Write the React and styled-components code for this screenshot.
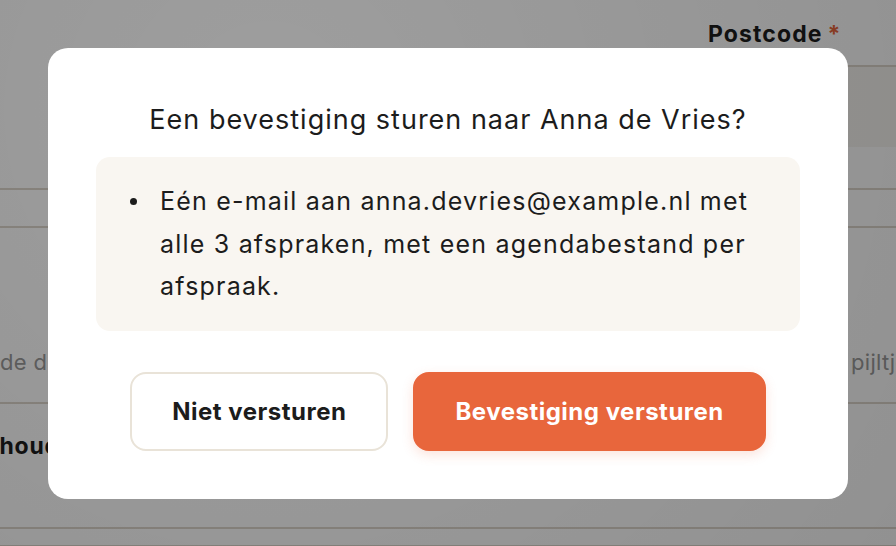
import styled, { createGlobalStyle } from "styled-components";

const GlobalStyle = createGlobalStyle`
    html, body {
        margin: 0;
        padding: 0;
        width: 896px;
        height: 546px;
        overflow: hidden;
        font-family: Inter, "Noto Sans", sans-serif;
        background: #ffffff;
    }
`;

const colors = {
    text: "#1c1c1c",
    muted: "#9a9a9a",
    line: "#ddd6cc",
    accent: "#e8663c",
    soft: "#f9f6f1",
    buttonBorder: "#e9e3d8",
};

// ---- page behind the dialog ----

const Page = styled.div`
    position: relative;
    width: 896px;
    height: 546px;
    overflow: hidden;
    background: #ffffff;
`;

const TopRow = styled.div`
    display: grid;
    grid-template-columns: 708px 1fr;
    height: 150px;
`;

const Field = styled.div`
    display: flex;
    flex-direction: column;
    padding-top: 20px;
`;

const Label = styled.div`
    font-size: 23px;
    font-weight: 700;
    letter-spacing: 1.1px;
    color: ${colors.text};
    line-height: 28px;
    white-space: nowrap;

    span {
        color: ${colors.accent};
        margin-left: 5px;
    }
`;

const Input = styled.div`
    margin-top: 17px;
    height: 80px;
    border-top: 2px solid ${colors.line};
    background: #f7f5f1;
`;

const Divider = styled.div`
    height: 0;
    border-top: 2px solid ${colors.line};
    margin-top: ${(p) => p.$gap}px;
`;

const Hint = styled.div`
    display: flex;
    justify-content: space-between;
    margin-top: 120px;
    font-size: 22px;
    letter-spacing: 0.3px;
    line-height: 28px;
    color: ${colors.muted};
    white-space: nowrap;
    overflow: hidden;

    span:last-child {
        width: 45px;
        overflow: hidden;
    }
`;

const SectionTitle = styled.div`
    margin-top: 28px;
    margin-left: -23px;
    font-size: 23px;
    font-weight: 700;
    letter-spacing: 0.8px;
    color: ${colors.text};
    line-height: 28px;
`;

const Overlay = styled.div`
    position: absolute;
    inset: 0;
    background: radial-gradient(circle at 30% 20%, rgba(0, 0, 0, 0.38), rgba(0, 0, 0, 0.43));
    display: flex;
    justify-content: center;
    align-items: flex-start;
    padding-top: 48px;
`;

// ---- dialog ----

const Dialog = styled.div`
    width: 800px;
    box-sizing: border-box;
    padding: 56px 48px 48px;
    background: #ffffff;
    border-radius: 20px;
    display: flex;
    flex-direction: column;
`;

const Title = styled.h2`
    margin: 0 0 21px;
    text-align: center;
    font-size: 27px;
    font-weight: 400;
    letter-spacing: 1px;
    line-height: 32px;
    color: ${colors.text};
`;

const Summary = styled.ul`
    margin: 0;
    padding: 23px 44px 23px 64px;
    background: ${colors.soft};
    border-radius: 14px;
    list-style: none;
`;

const Item = styled.li`
    position: relative;
    font-size: 25px;
    letter-spacing: 1.2px;
    line-height: 42.5px;
    color: ${colors.text};

    &::before {
        content: "";
        position: absolute;
        left: -30px;
        top: 18px;
        width: 7px;
        height: 7px;
        border-radius: 50%;
        background: ${colors.text};
    }
`;

const Actions = styled.div`
    display: flex;
    justify-content: center;
    gap: 25px;
    margin-top: 41px;
`;

const Button = styled.button`
    height: 79px;
    padding: 0 40px;
    border-radius: 16px;
    font-family: inherit;
    font-size: 24px;
    font-weight: 700;
    letter-spacing: 0.5px;
    cursor: pointer;
    border: 2px solid ${(p) => (p.$primary ? colors.accent : colors.buttonBorder)};
    background: ${(p) => (p.$primary ? colors.accent : "#ffffff")};
    color: ${(p) => (p.$primary ? "#ffffff" : colors.text)};
    box-shadow: ${(p) => (p.$primary ? "0 4px 12px rgba(232, 102, 60, 0.18)" : "none")};
`;

export default function App() {
    return (
        <>
            <GlobalStyle />
            <Page>
                <TopRow>
                    <div />
                    <Field>
                        <Label>
                            Postcode<span>*</span>
                        </Label>
                        <Input />
                    </Field>
                </TopRow>
                <Divider $gap={38} />
                <Divider $gap={36} />
                <Hint>
                    <span>de dienst of afspraak</span>
                    <span>pijltjes</span>
                </Hint>
                <Divider $gap={26} />
                <SectionTitle>Inhoud</SectionTitle>
                <Divider $gap={67} />
                <Divider $gap={16} />

                <Overlay>
                    <Dialog role="dialog" aria-modal="true">
                        <Title>Een bevestiging sturen naar Anna de Vries?</Title>
                        <Summary>
                            <Item>
                                Eén e-mail aan anna.devries@example.nl met alle 3 afspraken, met een
                                agendabestand per afspraak.
                            </Item>
                        </Summary>
                        <Actions>
                            <Button>Niet versturen</Button>
                            <Button $primary>Bevestiging versturen</Button>
                        </Actions>
                    </Dialog>
                </Overlay>
            </Page>
        </>
    );
}
